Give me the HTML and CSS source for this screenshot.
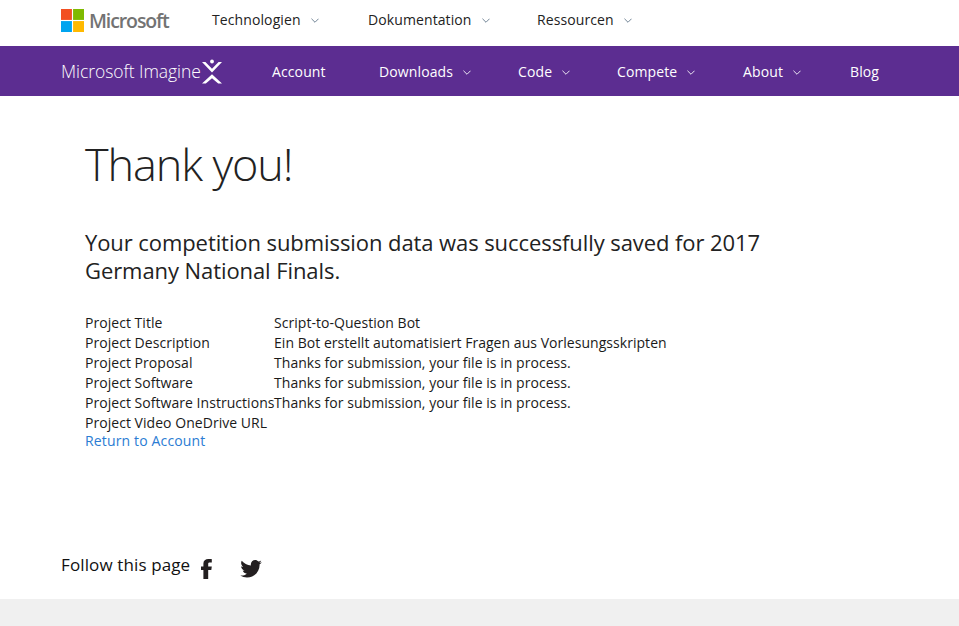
FILE: index.html
```html
<!DOCTYPE html>
<html lang="en">
<head>
<meta charset="utf-8">
<title>Thank you!</title>
<link rel="stylesheet" href="styles.css">
</head>
<body>
<header class="topbar">
  <a class="ms-logo" href="#">
    <svg class="ms-squares" width="23" height="23" viewBox="0 0 24 24"><rect width="11.4" height="11.4" fill="#f25022"/><rect x="12.6" width="11.4" height="11.4" fill="#7fba00"/><rect y="12.6" width="11.4" height="11.4" fill="#00a4ef"/><rect x="12.6" y="12.6" width="11.4" height="11.4" fill="#ffb900"/></svg>
    <span class="ms-word">Microsoft</span>
  </a>
  <nav class="topnav">
    <a class="topnav-item topnav-tech" href="#">Technologien<svg class="chev chev-top" viewBox="0 0 9 5"><path d="M.5.5 4.5 4.5 8.5.5"/></svg></a>
    <a class="topnav-item topnav-doc" href="#">Dokumentation<svg class="chev chev-top" viewBox="0 0 9 5"><path d="M.5.5 4.5 4.5 8.5.5"/></svg></a>
    <a class="topnav-item" href="#">Ressourcen<svg class="chev chev-top" viewBox="0 0 9 5"><path d="M.5.5 4.5 4.5 8.5.5"/></svg></a>
  </nav>
</header>
<nav class="mainbar">
  <a class="brand" href="#"><span class="brand-text">Microsoft Imagine</span>
    <svg class="brand-mark" width="20" height="25" viewBox="0 0 21 25"><circle cx="10.5" cy="2" r="2" fill="#fff"/><path d="M0 2.5H3.6L10.5 9.5 17.4 2.5H21L10.5 13.5Z" fill="#fff"/><path d="M10.5 15.5 21 25H17L10.5 19.5 4 25H0Z" fill="#fff"/></svg>
  </a>
  <a class="main-item item-account" href="#">Account</a>
  <a class="main-item item-downloads" href="#">Downloads<svg class="chev chev-main" viewBox="0 0 9 5"><path d="M.5.5 4.5 4.5 8.5.5"/></svg></a>
  <a class="main-item item-code" href="#">Code<svg class="chev chev-main" viewBox="0 0 9 5"><path d="M.5.5 4.5 4.5 8.5.5"/></svg></a>
  <a class="main-item item-compete" href="#">Compete<svg class="chev chev-main" viewBox="0 0 9 5"><path d="M.5.5 4.5 4.5 8.5.5"/></svg></a>
  <a class="main-item item-about" href="#">About<svg class="chev chev-main" viewBox="0 0 9 5"><path d="M.5.5 4.5 4.5 8.5.5"/></svg></a>
  <a class="main-item" href="#">Blog</a>
</nav>
<main class="content">
  <h1 class="title">Thank you!</h1>
  <h2 class="subtitle">Your competition submission data was successfully saved for 2017 Germany National Finals.</h2>
  <table class="details">
    <tr><td>Project Title</td><td>Script-to-Question Bot</td></tr>
    <tr><td>Project Description</td><td>Ein Bot erstellt automatisiert Fragen aus Vorlesungsskripten</td></tr>
    <tr><td>Project Proposal</td><td>Thanks for submission, your file is in process.</td></tr>
    <tr><td>Project Software</td><td>Thanks for submission, your file is in process.</td></tr>
    <tr><td>Project Software Instructions</td><td>Thanks for submission, your file is in process.</td></tr>
    <tr><td>Project Video OneDrive URL</td><td></td></tr>
  </table>
  <a class="return" href="#">Return to Account</a>
</main>
<section class="follow">
  <span class="follow-text">Follow this page</span>
  <svg class="fb" width="11" height="20" viewBox="0 0 11 20"><path fill="#231f20" d="M2.400 20V11H0V7.400H2.400V4.600C2.400 1.600 4.500 0 7.400 0 8.900 0 10.400 .1 10.800 .15V3.600H8.800C7.400 3.600 7.200 4.200 7.200 5V7.400H10.800L10.300 11H7.200V20Z"/></svg>
  <svg class="tw" width="22" height="18" viewBox="0 0 24 20"><path fill="#231f20" d="M24 2.400c-.9.400-1.800.650-2.800.8 1-.6 1.800-1.550 2.150-2.700-.950.550-2 .950-3.100 1.200C19.350.650 18.100 0 16.700 0c-2.700 0-4.900 2.200-4.900 4.900 0 .4.050.750.100 1.100C7.800 5.800 4.200 3.900 1.700.900c-.4.700-.650 1.550-.650 2.450 0 1.700.850 3.200 2.200 4.100-.8 0-1.550-.25-2.200-.6v.050c0 2.400 1.700 4.400 3.950 4.800-.4.100-.850.200-1.300.200-.3 0-.6 0-.9-.1.600 1.950 2.450 3.400 4.600 3.450-1.700 1.300-3.800 2.100-6.100 2.100-.4 0-.8 0-1.200-.050C2.200 18.700 4.800 19.500 7.550 19.500c9.050 0 14-7.500 14-14v-.650c.95-.7 1.800-1.550 2.450-2.450Z"/></svg>
</section>
<footer class="footer"></footer>
</body>
</html>
```
FILE: styles.css
```css
* { box-sizing: border-box; }
html, body { height: 100%; }
body {
  margin: 0;
  display: flex;
  flex-direction: column;
  overflow: hidden;
  background: #fff;
  color: #1a1a1a;
  font-family: "Open Sans", "Liberation Sans", sans-serif;
  font-size: 14px;
}
a { text-decoration: none; color: inherit; }
.topbar {
  height: 46px;
  display: flex;
  flex: none;
  align-items: center;
  padding-left: 61px;
}
.ms-logo { display: flex; align-items: center; width: 151px; }
.ms-squares { flex: none; margin-top: -5px; }
.ms-word {
  margin: -6px 0 0 5px;
  font-size: 19.5px;
  font-weight: 600;
  letter-spacing: -1.1px;
  color: #737373;
}
.topnav { display: flex; margin-top: -8px; }
.topnav-item {
  display: flex;
  align-items: center;
  font-size: 14px;
  letter-spacing: 0.1px;
  color: #222;
}
.topnav-tech { width: 156px; }
.topnav-doc { width: 169px; }
.chev { fill: none; width: 8px; height: 5px; margin-left: 10px; margin-top: 3px; }
.chev-top { stroke: #5f7487; }
.chev-main { stroke: #fff; }
.mainbar {
  height: 50px;
  flex: none;
  background: #5c2d91;
  color: #fff;
  display: flex;
  align-items: center;
  padding-left: 61px;
  font-size: 14px;
}
.brand { display: flex; align-items: center; width: 211px; }
.brand-text { font-size: 17.5px; font-weight: 300; letter-spacing: -0.05px; white-space: nowrap; }
.brand-mark { margin-left: 1px; flex: none; }
.main-item { display: flex; align-items: center; letter-spacing: 0.12px; white-space: nowrap; }
.item-account { width: 107px; }
.item-downloads { width: 139px; }
.item-code { width: 99px; }
.item-compete { width: 126px; }
.item-about { width: 107px; }
.content { padding: 0 0 0 85px; flex: none; }
.title {
  margin: 38px 0 0;
  font-size: 45px;
  line-height: 60px;
  font-weight: 300;
  letter-spacing: -1.1px;
  color: #222;
}
.subtitle {
  margin: 34px 0 0;
  width: 700px;
  font-size: 22px;
  line-height: 28px;
  font-weight: 400;
  letter-spacing: -0.08px;
  color: #222;
}
.details { border-collapse: collapse; margin-top: 29px; }
.details td { padding: 0; height: 20px; line-height: 20px; letter-spacing: 0.04px; white-space: nowrap; }
.details td:first-child { width: 189px; max-width: 189px; }
.return { display: block; line-height: 16px; color: #2b7cd3; letter-spacing: 0.15px; }
.follow {
  flex: none;
  display: flex;
  align-items: center;
  height: 40px;
  margin-top: 96px;
  padding-left: 61px;
}
.follow-text { margin-top: -2px; font-size: 17px; letter-spacing: 0.12px; color: #111; }
.fb { margin: 8px 0 0 11px; }
.tw { margin: 8px 0 0 28px; }
.footer { flex: 1; margin-top: 14px; background: #f0f0f0; }
```
